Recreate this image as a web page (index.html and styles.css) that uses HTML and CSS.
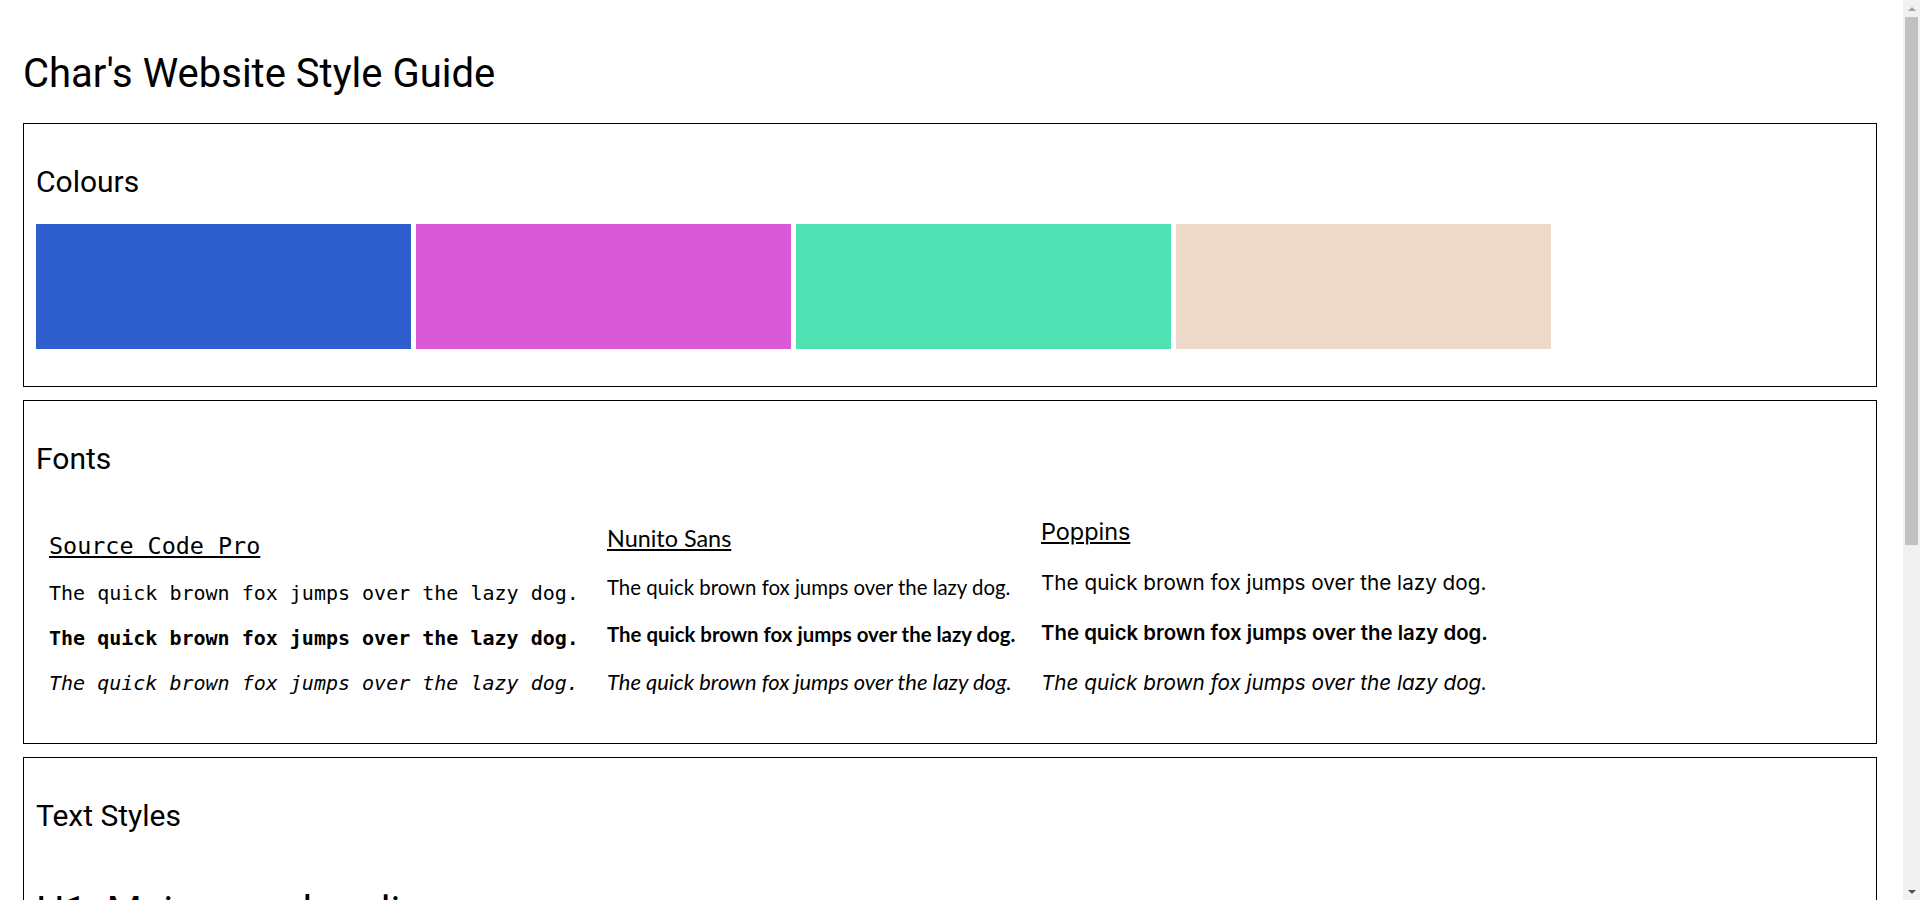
FILE: index.html
```html
<!DOCTYPE html>
<html lang="en">
<head>
<meta charset="utf-8">
<title>Char's Website Style Guide</title>
<link rel="stylesheet" href="styles.css">
</head>
<body>
<main class="page">
  <h1 class="page-title">Char's Website Style Guide</h1>

  <section class="panel panel-colours">
    <h2 class="panel-title">Colours</h2>
    <div class="swatches">
      <div class="swatch swatch-blue"></div>
      <div class="swatch swatch-pink"></div>
      <div class="swatch swatch-green"></div>
      <div class="swatch swatch-beige"></div>
    </div>
  </section>

  <section class="panel panel-fonts">
    <h2 class="panel-title">Fonts</h2>
    <div class="font-columns">
      <div class="font-col font-col-mono">
        <h3 class="font-name">Source Code Pro</h3>
        <p class="sample">The quick brown fox jumps over the lazy dog.</p>
        <p class="sample sample-bold">The quick brown fox jumps over the lazy dog.</p>
        <p class="sample sample-italic">The quick brown fox jumps over the lazy dog.</p>
      </div>
      <div class="font-col font-col-nunito">
        <h3 class="font-name">Nunito Sans</h3>
        <p class="sample">The quick brown fox jumps over the lazy dog.</p>
        <p class="sample sample-bold">The quick brown fox jumps over the lazy dog.</p>
        <p class="sample sample-italic">The quick brown fox jumps over the lazy dog.</p>
      </div>
      <div class="font-col font-col-poppins">
        <h3 class="font-name">Poppins</h3>
        <p class="sample">The quick brown fox jumps over the lazy dog.</p>
        <p class="sample sample-bold">The quick brown fox jumps over the lazy dog.</p>
        <p class="sample sample-italic">The quick brown fox jumps over the lazy dog.</p>
      </div>
    </div>
  </section>

  <section class="panel panel-text">
    <h2 class="panel-title panel-title-text">Text Styles</h2>
    <div class="text-samples">
      <h1 class="ts-h1">H1: Main page heading</h1>
      <h2 class="ts-h2">H2: Section heading</h2>
      <h3 class="ts-h3">H3: Sub-section heading</h3>
      <p class="ts-p">Paragraph: The quick brown fox jumps over the lazy dog. Body copy is set in Nunito Sans for comfortable reading across the site.</p>
      <p class="ts-p"><a class="link" href="#">Link: Visit the portfolio</a></p>
      <p class="ts-small">Small text: captions, dates and footnotes.</p>
    </div>
  </section>
</main>

<div class="scrollbar" aria-hidden="true">
  <span class="sb-button sb-up"></span>
  <span class="sb-track"><span class="sb-thumb"></span></span>
  <span class="sb-button sb-down"></span>
</div>
</body>
</html>
```
FILE: styles.css
```css
html, body {
  margin: 0;
  padding: 0;
}

body {
  font-family: Roboto, "Liberation Sans", sans-serif;
  color: #000;
  background: #fff;
}

.page {
  width: 1854px;
  padding: 23px 0 15px 23px;
}

.page-title {
  font-size: 40px;
  font-weight: 400;
  line-height: 47px;
  margin: 27px 0 26px;
}

.panel {
  border: 1px solid #000;
  padding: 40px 12px 37px;
  margin-bottom: 13px;
}

.panel:last-child {
  margin-bottom: 0;
}

.panel-title {
  font-size: 30px;
  font-weight: 400;
  line-height: 35px;
  margin: 0 0 25px;
}

/* Colours */
.swatches {
  display: flex;
  gap: 5px;
}

.swatch {
  width: 375px;
  height: 125px;
}

.swatch-blue { background: #2e5fcd; }
.swatch-pink { background: #d959d9; }
.swatch-green { background: #4fe1b1; }
.swatch-beige { background: #edd8ca; }

/* Fonts */
.panel-fonts {
  padding-bottom: 45px;
}

.panel-fonts .panel-title {
  margin-bottom: 40px;
}

.font-columns {
  display: flex;
  align-items: last baseline;
}

.font-col {
  padding: 0 13px;
  white-space: nowrap;
}

.font-col-mono { width: 532px; }
.font-col-nunito { width: 408px; }

.font-name {
  font-size: 23.4px;
  font-weight: 400;
  text-decoration: underline;
  margin: 0;
}

.sample {
  font-size: 20px;
  margin: 20px 0 0;
}

.sample-bold { font-weight: 700; }
.sample-italic { font-style: italic; }

.font-col-mono {
  font-family: "DejaVu Sans Mono", "Liberation Mono", monospace;
}
.font-col-mono .font-name { line-height: 29px; }
.font-col-mono .sample { line-height: 25px; }

.font-col-nunito {
  font-family: Lato, "Open Sans", sans-serif;
}
.font-col-nunito .font-name { line-height: 30px; }
.font-col-nunito .sample { font-size: 20.4px; line-height: 27px; }
.font-col-nunito .sample:first-of-type { margin-top: 21px; }
.font-col-nunito .sample-italic { font-size: 21.9px; }

.font-col-poppins {
  font-family: Inter, "Open Sans", sans-serif;
}
.font-col-poppins .font-name { line-height: 32px; }
.font-col-poppins .sample { font-size: 20.7px; line-height: 30px; }
.font-col-poppins .sample-bold { font-size: 20.4px; font-weight: 600; }

/* Text styles */
.panel-text {
  padding-bottom: 40px;
}

.panel-title-text {
  margin-bottom: 55px;
}

.ts-h1 {
  font-size: 40px;
  font-weight: 400;
  line-height: 47px;
  margin: 0 0 40px;
}

.ts-h2 {
  font-size: 30px;
  font-weight: 400;
  line-height: 35px;
  margin: 0 0 36px;
}

.ts-h3 {
  font-size: 24px;
  font-weight: 400;
  line-height: 29px;
  margin: 0 0 30px;
}

.ts-p {
  font-family: Lato, "Open Sans", sans-serif;
  font-size: 20px;
  line-height: 28px;
  margin: 0 0 20px;
}

.ts-small {
  font-family: Lato, "Open Sans", sans-serif;
  font-size: 14px;
  line-height: 20px;
  margin: 0;
}

.link { color: #2e5fcd; }

/* Window scrollbar (drawn over the page edge) */
.scrollbar {
  position: fixed;
  top: 0;
  right: 0;
  width: 17px;
  height: 100vh;
  background: #f1f1f1;
  display: flex;
  flex-direction: column;
}

.sb-button {
  flex: none;
  height: 17px;
  display: flex;
  align-items: center;
  justify-content: center;
}

.sb-button::before {
  content: "";
  width: 0;
  height: 0;
  border-left: 4px solid transparent;
  border-right: 4px solid transparent;
}

.sb-up::before {
  border-bottom: 4px solid #a3a3a3;
}

.sb-down::before {
  border-top: 4px solid #505050;
}

.sb-track {
  flex: 1;
  display: flex;
  flex-direction: column;
}

.sb-thumb {
  height: 528px;
  margin: 0 2px;
  background: #c1c1c1;
}
```
